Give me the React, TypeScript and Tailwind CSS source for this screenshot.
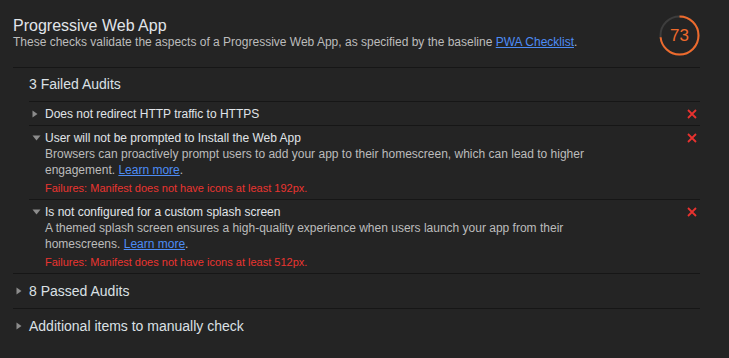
import React from "react";

const RightTri = () => (
  <svg width="6" height="8" viewBox="0 0 6 8" className="shrink-0">
    <path d="M0.5 0.5 L5.5 4 L0.5 7.5 Z" fill="#8c8c8c" />
  </svg>
);

const DownTri = () => (
  <svg width="9" height="6" viewBox="0 0 9 6" className="shrink-0">
    <path d="M0.5 0.5 L8.5 0.5 L4.5 5.5 Z" fill="#8c8c8c" />
  </svg>
);

const XIcon = () => (
  <svg width="10" height="10" viewBox="0 0 10 10" className="shrink-0">
    <path d="M1 1 L9 9 M9 1 L1 9" stroke="#e8322f" strokeWidth="1.8" />
  </svg>
);

const Gauge = () => {
  const r = 19;
  const c = 2 * Math.PI * r;
  return (
    <div className="relative w-[41px] h-[41px] shrink-0">
      <svg width="41" height="41" viewBox="0 0 41 41" className="absolute inset-0">
        <circle cx="20.5" cy="20.5" r={r} fill="none" stroke="#3d3d3d" strokeWidth="2" />
        <circle
          cx="20.5"
          cy="20.5"
          r={r}
          fill="none"
          stroke="#ee6a2c"
          strokeWidth="2"
          strokeDasharray={`${c * 0.73} ${c}`}
          transform="rotate(-90 20.5 20.5)"
        />
      </svg>
      <div className="absolute inset-0 flex items-center justify-center text-[17px] text-[#ee6a2c] leading-none">
        73
      </div>
    </div>
  );
};

type Audit = {
  title: string;
  desc?: React.ReactNode;
  failure?: string;
};

const audits: Audit[] = [
  { title: "Does not redirect HTTP traffic to HTTPS" },
  {
    title: "User will not be prompted to Install the Web App",
    desc: (
      <>
        Browsers can proactively prompt users to add your app to their homescreen, which can lead to higher
        engagement. <span className="text-[#4d8cf5] underline">Learn more</span>.
      </>
    ),
    failure: "Failures: Manifest does not have icons at least 192px.",
  },
  {
    title: "Is not configured for a custom splash screen",
    desc: (
      <>
        A themed splash screen ensures a high-quality experience when users launch your app from their
        homescreens. <span className="text-[#4d8cf5] underline">Learn more</span>.
      </>
    ),
    failure: "Failures: Manifest does not have icons at least 512px.",
  },
];

export default function App() {
  return (
    <div
      className="w-[729px] h-[358px] bg-[#242424] overflow-hidden pt-[15px] pl-[13px] pr-[29px]"
      style={{ fontFamily: '"Liberation Sans", Arial, sans-serif' }}
    >
      <div className="flex items-start justify-between pb-[11px]">
        <div className="pt-[2px]">
          <div className="text-[16px] leading-[18px] text-[#e1e5ea]">Progressive Web App</div>
          <div className="text-[12px] leading-[14px] text-[#bcbcbc]">
            These checks validate the aspects of a Progressive Web App, as specified by the baseline{" "}
            <span className="text-[#4d8cf5] underline">PWA Checklist</span>.
          </div>
        </div>
        <Gauge />
      </div>

      <div className="border-t border-[#161616]">
        <div className="pl-[16px]">
          <div className="pt-[6px] pb-[7px] text-[14px] leading-[20px] text-[#dbe0e5]">3 Failed Audits</div>
          {audits.map((a, i) => (
            <div key={i} className="border-t border-[#161616] pt-[4px] pb-[3px]">
              <div className="flex items-start">
                <div className="w-[16px] h-[16px] flex items-center pl-[3px]">
                  {a.desc ? <DownTri /> : <RightTri />}
                </div>
                <div className="flex-1 min-w-0">
                  <div className="text-[12px] leading-[16px] text-[#e0e4e9]">{a.title}</div>
                  {a.desc && (
                    <p className="text-[12px] leading-[16px] text-[#bcbcbc] pr-[40px]">{a.desc}</p>
                  )}
                  {a.failure && (
                    <div className="mt-[2px] text-[11px] leading-[16px] text-[#ea3430]">
                      {a.failure}
                    </div>
                  )}
                </div>
                <div className="w-[16px] h-[16px] flex items-center justify-end mr-[3px]">
                  <XIcon />
                </div>
              </div>
            </div>
          ))}
        </div>
      </div>

      <div className="border-t border-[#161616] py-[7px] flex items-center">
        <div className="w-[16px] flex items-center pl-[3px]">
          <RightTri />
        </div>
        <div className="text-[14px] leading-[20px] text-[#dbe0e5]">8 Passed Audits</div>
      </div>
      <div className="border-t border-[#161616] py-[7px] flex items-center">
        <div className="w-[16px] flex items-center pl-[3px]">
          <RightTri />
        </div>
        <div className="text-[14px] leading-[20px] text-[#dbe0e5]">Additional items to manually check</div>
      </div>
    </div>
  );
}
